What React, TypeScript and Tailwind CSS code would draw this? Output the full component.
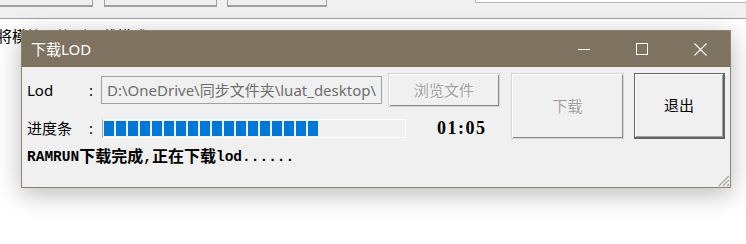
import React from "react";

const ui = "font-['Noto_Sans','Noto_Sans_CJK_SC',sans-serif]";

function TitleButton({ children, w }: { children: React.ReactNode; w: string }) {
  return <div className={`${w} h-full flex items-center justify-center`}>{children}</div>;
}

function ProgressBlocks({ count }: { count: number }) {
  return (
    <div className="flex gap-[2px] h-full">
      {Array.from({ length: count }).map((_, i) => (
        <div key={i} className="w-[10px] h-full bg-[#0078d7]" />
      ))}
    </div>
  );
}

export default function App() {
  return (
    <div className={`relative w-[746px] h-[244px] bg-white overflow-hidden ${ui}`}>
      {/* parent window behind the dialog */}
      <div className="h-[19px] bg-[#f0f0f0] border-b border-[#a0a0a0] flex items-start">
        <div className="w-[93px] h-[7px] border-r border-b-2 border-[#a0a0a0] bg-[#efefef]" />
        <div className="ml-[11px] w-[113px] h-[7px] border-x border-b-2 border-[#a0a0a0] bg-[#efefef]" />
        <div className="ml-[10px] w-[100px] h-[7px] border-x border-b-2 border-[#a0a0a0] bg-[#efefef]" />
        <div className="ml-[148px] flex-1 h-[3px] border-l border-b border-[#b4b4b4] bg-white" />
      </div>
      <div className="ml-[-3px] mt-[8px] text-[15px] leading-[18px] text-black">将模块切换到下载模式</div>

      {/* dialog window */}
      <div className="absolute left-[21px] top-[30px] w-[710px] h-[158px] border border-[#8d8371] bg-[#f0f0f0] shadow-[0_6px_24px_rgba(0,0,0,0.28)] flex flex-col">
        <div className="h-[36px] bg-[#7e7360] flex items-center">
          <div className="pl-[9px] text-[15px] text-white flex-1">下载LOD</div>
          <TitleButton w="w-[59px]">
            <div className="w-[12px] h-px bg-white" />
          </TitleButton>
          <TitleButton w="w-[58px]">
            <div className="w-[12px] h-[12px] border border-white" />
          </TitleButton>
          <TitleButton w="w-[59px]">
            <svg width="13" height="13" viewBox="0 0 13 13">
              <path d="M0.5 0.5 L12.5 12.5 M12.5 0.5 L0.5 12.5" stroke="#fff" strokeWidth="1.1" />
            </svg>
          </TitleButton>
        </div>

        <div className="relative flex-1 pt-[6px] pl-[5px] flex items-start">
          <div className="w-[473px] flex flex-col">
            <div className="h-[34px] flex items-center text-[15px] text-black">
              <div className="w-[62px]">Lod</div>
              <div className="w-[12px]">:</div>
              <div className="w-[281px] h-[28px] border border-[#a0a0a0] bg-[#f0f0f0] overflow-hidden whitespace-nowrap pl-[5px] leading-[26px] text-[#6d6d6d]">
                D:\OneDrive\同步文件夹\luat_desktop\
              </div>
              <div className="ml-[6px] w-[112px] h-[34px] flex items-center justify-center border border-[#d4d4d4] shadow-[inset_1px_1px_0_#fff,inset_-1px_-1px_0_#8a8a8a] text-[#a0a0a0] [text-shadow:1px_1px_0_#fff]">
                浏览文件
              </div>
            </div>

            <div className="mt-[11px] h-[20px] flex items-center text-[15px] text-black">
              <div className="w-[62px]">进度条</div>
              <div className="w-[13px]">:</div>
              <div className="w-[304px] h-[19px] border border-white border-l-[#a0a0a0] bg-[#f0f0f0] pt-px pl-px pb-px">
                <ProgressBlocks count={18} />
              </div>
              <div className="ml-[31px] font-['Liberation_Serif',serif] font-bold text-[18px] tracking-[1.5px]">01:05</div>
            </div>

            <div className="mt-[10px] h-[20px] flex items-center font-['Liberation_Mono','Noto_Sans_CJK_SC',monospace] font-bold text-[14.5px] text-black whitespace-nowrap">
              RAMRUN<span className="text-[16px]">下载完成</span>,<span className="text-[16px]">正在下载</span>lod......
            </div>
          </div>

          <div className="ml-[11px] w-[113px] h-[66px] flex items-center justify-center text-[15px] border border-[#d4d4d4] shadow-[inset_1px_1px_0_#fff,inset_-1px_-1px_0_#8a8a8a] text-[#a0a0a0] [text-shadow:1px_1px_0_#fff]">
            下载
          </div>
          <div className="ml-[10px] w-[91px] h-[66px] flex items-center justify-center text-[15px] border border-[#646464] border-r-2 border-b-2 shadow-[inset_1px_1px_0_#fff,inset_-1px_-1px_0_#a0a0a0] text-black">
            退出
          </div>

          <svg className="absolute right-0 bottom-0" width="14" height="14" viewBox="0 0 14 14">
            <path d="M13 3 L3 13 M13 7 L7 13 M13 11 L11 13" stroke="#a0a0a0" strokeWidth="1.4" />
            <path d="M13 4.5 L4.5 13 M13 8.5 L8.5 13" stroke="#fff" strokeWidth="0.8" />
          </svg>
        </div>
      </div>
    </div>
  );
}
